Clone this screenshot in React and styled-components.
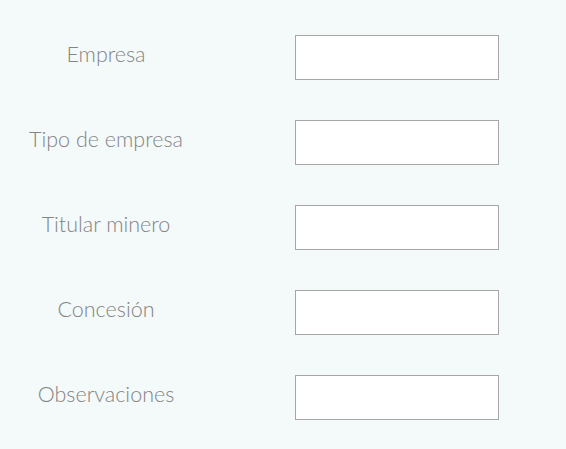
import React from 'react';
import styled, { createGlobalStyle } from 'styled-components';

const GlobalStyle = createGlobalStyle`
  html, body {
    margin: 0;
    padding: 0;
    background: #f4f9f9;
  }
  body {
    font-family: 'Lato', 'Open Sans', sans-serif;
  }
`;

const Form = styled.form`
  display: grid;
  grid-template-columns: 212px 204px;
  column-gap: 83px;
  row-gap: 40px;
  padding: 35px 0 29px;
  width: 566px;
  height: 449px;
  box-sizing: border-box;
`;

const Label = styled.label`
  display: flex;
  align-items: center;
  justify-content: center;
  height: 45px;
  padding-bottom: 8px;
  box-sizing: border-box;
  font-size: 21.5px;
  font-weight: 300;
  color: #848484;
`;

const Field = styled.input`
  height: 45px;
  width: 204px;
  box-sizing: border-box;
  border: 1px solid #a6a6a6;
  background: #fff;
  margin: 0;
  padding: 0 10px;
  font: inherit;
`;

const fields = [
  { id: 'empresa', label: 'Empresa' },
  { id: 'tipo', label: 'Tipo de empresa' },
  { id: 'titular', label: 'Titular minero' },
  { id: 'concesion', label: 'Concesión' },
  { id: 'obs', label: 'Observaciones' },
];

export default function App() {
  return (
    <>
      <GlobalStyle />
      <Form>
        {fields.map((f) => (
          <React.Fragment key={f.id}>
            <Label htmlFor={f.id}>{f.label}</Label>
            <Field id={f.id} type="text" />
          </React.Fragment>
        ))}
      </Form>
    </>
  );
}
